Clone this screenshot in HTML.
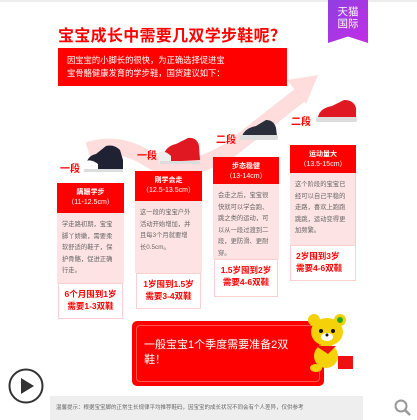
<!DOCTYPE html>
<html><head><meta charset="utf-8"><style>
*{margin:0;padding:0;box-sizing:border-box}
body{width:417px;height:420px;background:#fff;position:relative;overflow:hidden;font-family:"Liberation Sans","Noto Sans CJK SC",sans-serif}
.a{position:absolute}
.hd{background:#f00;color:#fff;text-align:center;font-size:7px;line-height:10px;padding-top:5px}
.bd{background:#fde3e3;color:#666;font-size:6.3px;line-height:11.5px;padding:6px 4px 0 5px}
.bt{background:#fff;border:1px solid #fbd0d0;color:#f00;font-weight:bold;font-size:8.5px;line-height:12px;text-align:center;padding-top:4px}
.lbl{color:#f00;font-weight:bold;font-size:10px}
</style></head><body>
<div class="a" style="left:0;top:0;width:417px;height:2px;background:#eee"></div>
<svg class="a" style="left:0;top:0" width="417" height="420">
<path d="M88 150 Q120 140 150 160 Q180 180 230 150 L300 95" stroke="#fdd" stroke-width="16" fill="none"/>
<polygon points="287,80 318,75 306,104" fill="#fdd"/>
<!-- shoe1 navy -->
<path d="M86 168 Q86 156 96 154 L106 146 Q114 144 120 150 L123 160 L123 170 L86 170Z" fill="#1e2233"/>
<path d="M84 162 Q90 158 98 164 L98 172 L84 172Z" fill="#fff"/>
<rect x="84" y="169" width="39" height="3" fill="#ddd"/>
<!-- shoe2 red -->
<path d="M163 156 Q166 146 176 144 L188 138 Q197 137 199 146 L200 160 L163 162Z" fill="#e01822"/>
<path d="M159 152 Q165 150 171 156 L171 164 L159 164Z" fill="#eee"/>
<rect x="160" y="161" width="40" height="3" fill="#ddd"/>
<!-- shoe3 navy -->
<path d="M242 136 Q245 128 256 126 L266 120 Q274 120 276 128 L277 136Z" fill="#2a2e3a"/>
<rect x="240" y="135" width="38" height="5" rx="2" fill="#ddd"/>
<!-- shoe4 red -->
<path d="M318 117 Q320 108 332 106 L344 100 Q354 100 356 108 L356 118Z" fill="#e01822"/>
<rect x="316" y="117" width="41" height="5" rx="2" fill="#ddd"/>
</svg>
<div class="a" style="left:58px;top:22px;font-size:16px;font-weight:bold;color:#f00;letter-spacing:0.3px">宝宝成长中需要几双学步鞋呢？</div>
<div class="a" style="left:328px;top:0;width:40px;height:43px;background:linear-gradient(135deg,#8e3fe0,#c32ee6);clip-path:polygon(0 0,100% 0,100% 100%,50% 85%,0 100%);color:#fff;font-size:10.5px;line-height:12px;text-align:center;padding-top:6px">天猫<br>国际</div>
<div class="a" style="left:58px;top:48px;width:229px;height:38px;background:#f00;color:#fff;font-size:8.3px;line-height:13px;padding:6px 0 0 9px">因宝宝的小脚长的很快，为正确选择促进宝<br>宝骨骼健康发育的学步鞋，国货建议如下：</div>
<div class="a lbl" style="left:60px;top:160px">一段</div>
<div class="a lbl" style="left:137px;top:147px">一段</div>
<div class="a lbl" style="left:216px;top:131px">二段</div>
<div class="a lbl" style="left:291px;top:113px">二段</div>
<div class="a hd" style="left:57px;top:183px;width:67px;height:30px"><b>蹒跚学步</b><br>（11-12.5cm）</div>
<div class="a bd" style="left:57px;top:213px;width:67px;height:70px">学走路初期，宝宝<br>脚丫娇嫩，需要柔<br>软舒适的鞋子，保<br>护骨骼，促进正确<br>行走。</div>
<div class="a bt" style="left:58px;top:283px;width:65px;height:36px">6个月囤到1岁<br>需要1-3双鞋</div>
<div class="a hd" style="left:135px;top:171px;width:67px;height:30px"><b>刚学会走</b><br>（12.5-13.5cm）</div>
<div class="a bd" style="left:135px;top:201px;width:67px;height:72px">这一段的宝宝户外<br>活动开始增加，并<br>且每3个月就要增<br>长0.5cm。</div>
<div class="a bt" style="left:136px;top:273px;width:65px;height:36px">1岁囤到1.5岁<br>需要3-4双鞋</div>
<div class="a hd" style="left:213px;top:157px;width:66px;height:27px"><b>步态稳健</b><br>（13-14cm）</div>
<div class="a bd" style="left:213px;top:184px;width:66px;height:75px">会走之后，宝宝很<br>快就可以学会跑、<br>跳之类的运动，可<br>以从一段过渡到二<br>段，更防滑、更耐<br>穿。</div>
<div class="a bt" style="left:214px;top:259px;width:64px;height:38px">1.5岁囤到2岁<br>需要4-6双鞋</div>
<div class="a hd" style="left:290px;top:145px;width:66px;height:28px"><b>运动量大</b><br>（13.5-15cm）</div>
<div class="a bd" style="left:290px;top:173px;width:66px;height:72px;border-right:1px solid #fcc">这个阶段的宝宝已<br>经可以自己平稳的<br>走路，喜欢上跑跑<br>跳跳，运动变得更<br>加频繁。</div>
<div class="a bt" style="left:290px;top:245px;width:66px;height:36px;text-align:left;padding-left:5px">2岁囤到3岁<br>需要4-6双鞋</div>
<div class="a" style="left:132px;top:321px;width:192px;height:65px;background:#f00;border-radius:5px"></div>
<div class="a" style="left:136px;top:325px;width:184px;height:57px;border:1px solid #ff5555;border-radius:4px"></div>
<div class="a" style="left:144px;top:338px;color:#fff;font-size:11px;line-height:15px;width:170px">一般宝宝1个季度需要准备2双<br>鞋！</div>
<svg class="a" style="left:306px;top:312px" width="52" height="62">
<circle cx="8" cy="8" r="6" fill="#f5d10a"/><circle cx="34" cy="8" r="6" fill="#f5d10a"/><circle cx="34" cy="8" r="3" fill="#2a2"/>
<ellipse cx="21" cy="20" rx="16" ry="14" fill="#f5d10a"/>
<circle cx="15" cy="19" r="2" fill="#111"/><circle cx="27" cy="19" r="2" fill="#111"/>
<ellipse cx="21" cy="25" rx="6" ry="4" fill="#fff"/><circle cx="21" cy="23" r="1.5" fill="#111"/>
<ellipse cx="20" cy="44" rx="12" ry="12" fill="#f5d10a"/>
<path d="M10 34 L30 34 L22 42Z" fill="#e11"/>
<rect x="32" y="44" width="15" height="13" fill="#e11"/>
<ellipse cx="10" cy="56" rx="6" ry="4" fill="#f5d10a"/>
</svg>
<svg class="a" style="left:7px;top:367px" width="38" height="38"><circle cx="19" cy="19" r="16.5" fill="#fff" stroke="#333" stroke-width="2"/><path d="M14 11 L27 19 L14 27Z" fill="#333"/></svg>
<div class="a" style="left:50px;top:396px;width:313px;height:24px;background:#eee;color:#666;font-size:5.5px;line-height:24px;padding-left:6px;white-space:nowrap">温馨提示：根据宝宝脚的正常生长规律平均推荐鞋码，因宝宝的成长状况不同会有个人差异，仅供参考</div>
<svg class="a" style="left:393px;top:398px" width="20" height="20"><circle cx="8" cy="8" r="5.5" fill="none" stroke="#999" stroke-width="2"/><path d="M12 12 L17 17" stroke="#999" stroke-width="2.5"/></svg>
</body></html>
